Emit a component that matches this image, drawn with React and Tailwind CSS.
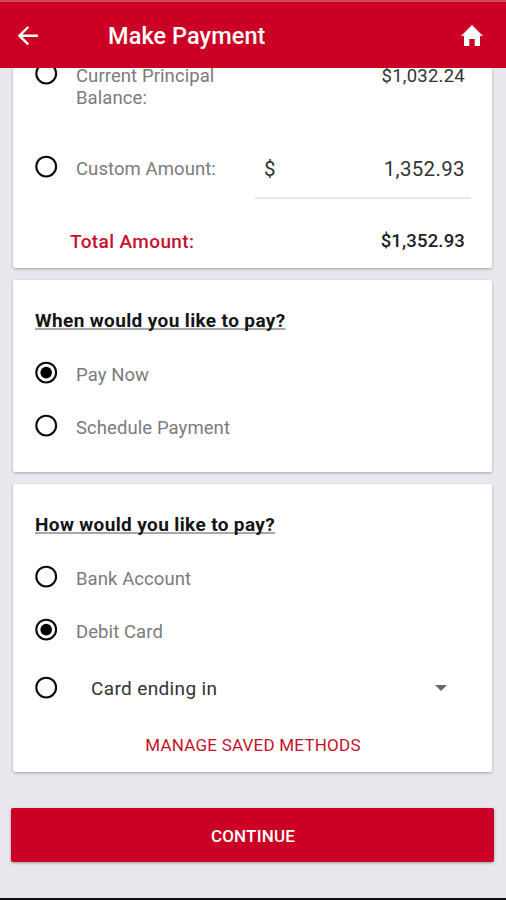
function Radio({ checked }) {
  return (
    <svg viewBox="0 0 24 24" className="h-6 w-6 shrink-0" role="radio" aria-checked={!!checked}>
      <circle cx="12.2" cy="11.6" r="9.9" fill="none" stroke="#0b0b0b" strokeWidth="2.1" />
      {checked && <circle cx="12.2" cy="11.6" r="5.8" fill="#000" />}
    </svg>
  );
}

function Option({ label, checked }) {
  return (
    <div className="flex items-center">
      <Radio checked={checked} />
      <span className="ml-[18px] pt-[4px] text-[18.5px] leading-[20px] tracking-[0.08px] text-[#7b7b7b]">{label}</span>
    </div>
  );
}

function Card({ className, children }) {
  return (
    <section
      className={`mx-[13px] w-[479px] shrink-0 rounded-[2px] bg-white pl-[21px] shadow-[0_1px_3px_rgba(0,0,0,0.3)] ${className}`}
    >
      {children}
    </section>
  );
}

function Question({ children }) {
  return (
    <h2 className="ml-px text-[19px] leading-6 font-bold tracking-[0.37px] text-[#151515] underline decoration-[#a8a8a8] decoration-2 underline-offset-[1px] [text-decoration-skip-ink:none]">
      {children}
    </h2>
  );
}

export default function App() {
  return (
    <div className="flex h-[900px] w-[506px] flex-col overflow-hidden border-b-2 border-[#111] bg-[#e8e8ee] font-[Roboto,sans-serif]">
      <header className="z-10 flex h-[68px] shrink-0 items-center border-t-2 border-[#cf4a5a] bg-[#cc0024] pt-[2px] text-white">
        <svg viewBox="0 0 20 20" className="ml-[17.5px] h-5 w-5" fill="none" stroke="currentColor" strokeWidth="2.4">
          <path d="M19.8 9.7H1.8M10.2 1L1.5 9.7l8.7 8.7" />
        </svg>
        <h1 className="ml-[70.5px] pb-px text-[23.5px] leading-7 font-medium tracking-[0.08px]">Make Payment</h1>
        <svg viewBox="0 0 22 21" className="mr-[23px] mb-[2px] ml-auto h-[21px] w-[22px]" fill="currentColor">
          <path d="M11 0L0 11h3V21h5.3v-7h5.4v7H19V11h3z" />
        </svg>
      </header>

      <main className="flex min-h-0 flex-1 flex-col">
        <Card className="h-[200px] pr-[27px]">
          <div className="-mt-[6px] flex h-[93px] items-start">
            <Radio />
            <span className="ml-[18px] w-[160px] pt-[4px] text-[18.5px] leading-[21.5px] tracking-[0.08px] text-[#7b7b7b]">
              Current Principal Balance:
            </span>
            <span className="ml-auto pt-[4px] text-[18.5px] leading-[21.5px] tracking-[0.24px] text-[#333]">
              $1,032.24
            </span>
          </div>
          <div className="flex h-[49px] items-start">
            <Option label="Custom Amount:" />
            <div className="-mr-[6px] ml-auto flex h-[44px] w-[216px] justify-between border-b-2 border-[#e8e8e8] pr-[6px] pl-[9px] text-[20.5px] leading-7 tracking-[0.35px] text-[#333]">
              <span>$</span>
              <span>1,352.93</span>
            </div>
          </div>
          <div className="mt-[24px] flex h-6 items-center justify-between pl-[36px] font-medium">
            <span className="pt-[3px] text-[19px] leading-6 tracking-[0.38px] text-[#c8102e]">Total Amount:</span>
            <span className="pt-[2px] text-[18.5px] leading-6 tracking-[0.16px] text-[#222]">$1,352.93</span>
          </div>
        </Card>

        <Card className="mt-3 flex h-[192px] flex-col pt-[29px]">
          <Question>When would you like to pay?</Question>
          <div className="mt-[28px] flex flex-col gap-[29px]">
            <Option label="Pay Now" checked />
            <Option label="Schedule Payment" />
          </div>
        </Card>

        <Card className="mt-3 flex h-[288px] flex-col pt-[29px]">
          <Question>How would you like to pay?</Question>
          <div className="mt-[28px] flex flex-col gap-[29px]">
            <Option label="Bank Account" />
            <Option label="Debit Card" checked />
          </div>
          <div className="mt-[34px] flex h-6 items-center">
            <Radio />
            <span className="ml-[33px] pt-[2px] text-[19px] leading-[22px] tracking-[0.36px] text-[#333]">
              Card ending in
            </span>
            <svg viewBox="0 0 12 6" className="mr-[45px] ml-auto h-[6px] w-3" fill="#666">
              <path d="M0 0h12L6 6z" />
            </svg>
          </div>
          <button className="mt-[33px] mr-[20px] text-center text-[17px] leading-6 tracking-[0.22px] text-[#c4122c]">
            MANAGE SAVED METHODS
          </button>
        </Card>

        <button className="mx-[11px] mt-[36px] h-[54px] w-[483px] shrink-0 rounded-[2px] bg-[#cc0024] pt-[3px] pl-px text-[17px] font-medium tracking-[0.2px] text-white shadow-[0_1px_3px_rgba(0,0,0,0.35)]">
          CONTINUE
        </button>
      </main>
    </div>
  );
}
